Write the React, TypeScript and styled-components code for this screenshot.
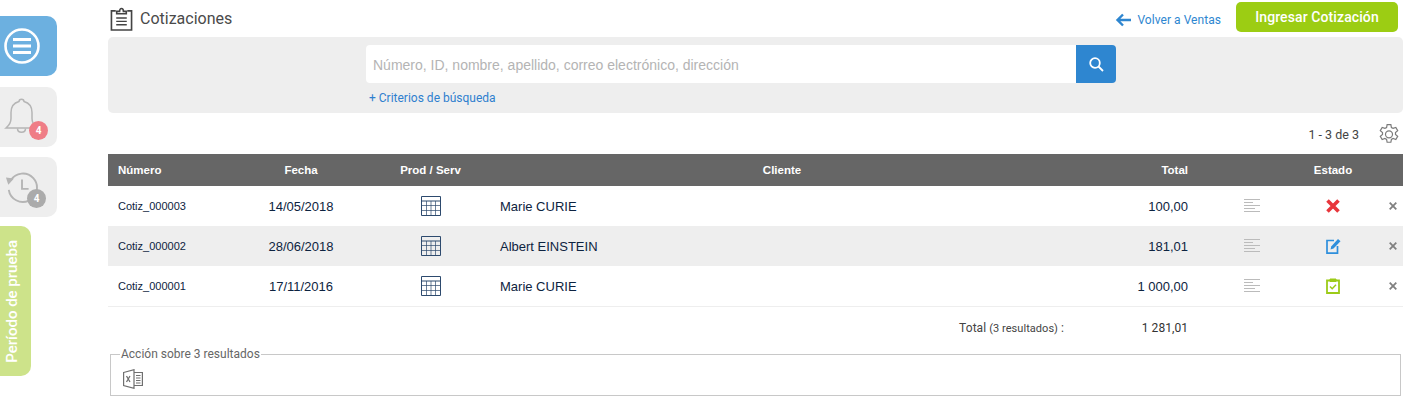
import React from 'react';
import styled, {createGlobalStyle} from 'styled-components';

const GlobalStyle = createGlobalStyle`
    html, body {
        margin: 0;
        padding: 0;
        background: #fff;
    }
    * {
        box-sizing: border-box;
    }
`

const COLUMNS = '133px 120px 139px 564px 134px 108px 54px 43px';

type Status = 'rejected' | 'draft' | 'accepted';

const rows: {id: string, date: string, client: string, total: string, status: Status}[] = [
    {id: 'Cotiz_000003', date: '14/05/2018', client: 'Marie CURIE', total: '100,00', status: 'rejected'},
    {id: 'Cotiz_000002', date: '28/06/2018', client: 'Albert EINSTEIN', total: '181,01', status: 'draft'},
    {id: 'Cotiz_000001', date: '17/11/2016', client: 'Marie CURIE', total: '1 000,00', status: 'accepted'},
];

const MenuIcon = () => (
    <svg width="38" height="38" viewBox="0 0 38 38" fill="none" stroke="#fff">
        <circle cx="19" cy="19" r="16.500" strokeWidth="2.600"/>
        <path d="M10 12.500h18M10 19h18M10 25.500h18" strokeWidth="3"/>
    </svg>
);

const BellIcon = () => (
    <svg width="36" height="38" viewBox="0 0 36 38" fill="none" stroke="#b5b5b5" strokeWidth="1.500">
        <path d="M15 3.500c0-3 5-3 5 0 5.500 1.500 8 5.500 8 11v6c0 4 2 7 5 9.500H2c3-2.500 5-5.500 5-9.500v-6c0-5.500 2.500-9.500 8-11z"/>
        <path d="M13.500 30.500c0 5 8 5 8 0"/>
    </svg>
);

const HistoryIcon = () => (
    <svg width="34" height="34" viewBox="0 0 36 36" fill="none" stroke="#b5b5b5" strokeWidth="2">
        <path d="M6 11A15 15 0 1 1 4 21"/>
        <path d="M1 8l8.500 1-6 6.500z" fill="#b5b5b5" stroke="none"/>
        <path d="M18 10v10h7"/>
    </svg>
);

const ClipboardIcon = () => (
    <svg width="23" height="26" viewBox="0 0 24 26" fill="none" stroke="#444" strokeWidth="1.700">
        <path d="M6 4.500H1.500v20h21v-20H18"/>
        <path d="M7 7.500V5h3c0-4 4-4 4 0h3v2.500z" fill="#fff"/>
        <path d="M6.500 12h11M6.500 15.500h11M6.500 19h11" strokeWidth="1.500"/>
    </svg>
);

const BackArrow = () => (
    <svg width="16" height="14" viewBox="0 0 16 14" fill="none" stroke="#2e86d0" strokeWidth="2.400">
        <path d="M16 7H2.500M8 1.500L2.500 7 8 12.500"/>
    </svg>
);

const SearchIcon = () => (
    <svg width="16" height="16" viewBox="0 0 16 16" fill="none" stroke="#fff" strokeWidth="1.800">
        <circle cx="7" cy="7" r="4.800"/>
        <path d="M10.500 10.500L15 15"/>
    </svg>
);

const GearIcon = () => (
    <svg width="22" height="22" viewBox="0 0 20 20" fill="none" stroke="#7b7b7b" strokeWidth="1.100">
        <path d="M8.300 1h3.400l.5 2.600 1.500.8 2.500-.9 1.700 2.900-2 1.700v1.800l2 1.700-1.700 2.900-2.500-.9-1.500.8-.5 2.600H8.300l-.5-2.600-1.500-.8-2.500.9-1.700-2.900 2-1.700V8.100l-2-1.700 1.700-2.900 2.500.9 1.500-.8z" transform="translate(0 .5)"/>
        <circle cx="10" cy="10.300" r="3.200"/>
    </svg>
);

const GridIcon = () => (
    <svg width="20" height="20" viewBox="0 0 20 20" fill="none" stroke="#2d4a6e" strokeWidth="1">
        <path d="M.5.500h19v19H.5zM.5 5h19"/>
        <path d="M.5 9.500h19M.5 14.500h19M5.500 5v14.500M10 5v14.500M14.500 5v14.500" strokeOpacity=".7"/>
    </svg>
);

const NotesIcon = () => (
    <svg width="16" height="14" viewBox="0 0 16 14" fill="none" stroke="#bbb" strokeWidth="1.100">
        <path d="M0 .500h16M0 3.500h9M0 6.500h16M0 9.500h11M0 12.500h16"/>
    </svg>
);

const RejectedIcon = () => (
    <svg width="14" height="14" viewBox="0 0 14 14" fill="none" stroke="#e8363c" strokeWidth="3.600">
        <path d="M1.500 1.500l11 11M12.500 1.500l-11 11"/>
    </svg>
);

const DraftIcon = () => (
    <svg width="15" height="16" viewBox="0 0 15 16" fill="none">
        <path d="M8 2.500H1v12.700h10.500V8" stroke="#2e8fdc" strokeWidth="1.700"/>
        <path d="M4.500 11.500l.7-3L12 1l2.500 2.200-7 7.400z" fill="#2e8fdc"/>
    </svg>
);

const AcceptedIcon = () => (
    <svg width="14" height="16" viewBox="0 0 14 16" fill="none" stroke="#9ccb19">
        <path d="M1 2.500h12v12.500H1z" strokeWidth="1.800"/>
        <path d="M4 1h6v2.500H4z" fill="#9ccb19"/>
        <path d="M4 8.500l2.200 2.200L10 6.800" strokeWidth="1.500"/>
    </svg>
);

const RemoveIcon = () => (
    <svg width="8" height="8" viewBox="0 0 8 8" fill="none" stroke="#808080" strokeWidth="1.800">
        <path d="M.7.700l6.600 6.600M7.300.700L.7 7.300"/>
    </svg>
);

const ExcelIcon = () => (
    <svg width="20" height="20" viewBox="0 0 20 20" fill="none" stroke="#6f6f6f" strokeWidth="1.200">
        <path d="M.6 3.500L11 .7v18.600L.6 16.500z"/>
        <path d="M11 3.500h8.400v13H11M13 6.500h4.500M13 9h4.500M13 11.500h4.500M13 14h4.500"/>
        <path d="M3.500 7l3.500 6M7 7l-3.500 6" strokeWidth="1.300"/>
    </svg>
);

const statusIcons = {
    rejected: <RejectedIcon/>,
    draft: <DraftIcon/>,
    accepted: <AcceptedIcon/>,
};

export default function App() {
    return (
        <Page>
            <GlobalStyle/>
            <Sidebar>
                <SideButton $active><MenuIcon/></SideButton>
                <SideButton>
                    <BellIcon/>
                    <Badge $red>4</Badge>
                </SideButton>
                <SideButton>
                    <HistoryIcon/>
                    <Badge>4</Badge>
                </SideButton>
                <TrialTab><span>Período de prueba</span></TrialTab>
            </Sidebar>

            <Main>
                <Header>
                    <Title><ClipboardIcon/>Cotizaciones</Title>
                    <HeaderActions>
                        <BackLink><BackArrow/>Volver a Ventas</BackLink>
                        <PrimaryButton>Ingresar Cotización</PrimaryButton>
                    </HeaderActions>
                </Header>

                <SearchPanel>
                    <SearchColumn>
                        <SearchBar>
                            <SearchInput placeholder="Número, ID, nombre, apellido, correo electrónico, dirección"/>
                            <SearchButton><SearchIcon/></SearchButton>
                        </SearchBar>
                        <CriteriaLink>+ Criterios de búsqueda</CriteriaLink>
                    </SearchColumn>
                </SearchPanel>

                <Pager>
                    <span>1 - 3 de 3</span>
                    <GearIcon/>
                </Pager>

                <HeadRow>
                    <HeadCell $align="left">Número</HeadCell>
                    <HeadCell>Fecha</HeadCell>
                    <HeadCell>Prod / Serv</HeadCell>
                    <HeadCell>Cliente</HeadCell>
                    <HeadCell $align="right">Total</HeadCell>
                    <span/>
                    <HeadCell>Estado</HeadCell>
                    <span/>
                </HeadRow>

                {rows.map((row, i) => (
                    <Row key={row.id} $shaded={i === 1} $last={i === rows.length - 1}>
                        <IdCell>{row.id}</IdCell>
                        <Cell $align="center">{row.date}</Cell>
                        <Cell $align="center"><GridIcon/></Cell>
                        <Cell>{row.client}</Cell>
                        <Cell $align="right">{row.total}</Cell>
                        <Cell $align="center"><NotesIcon/></Cell>
                        <Cell $align="center">{statusIcons[row.status]}</Cell>
                        <RemoveCell><RemoveIcon/></RemoveCell>
                    </Row>
                ))}

                <TotalRow>
                    <TotalLabel>Total <small>(3 resultados)</small> :</TotalLabel>
                    <TotalValue>1 281,01</TotalValue>
                </TotalRow>

                <ActionBox>
                    <legend>Acción sobre 3 resultados</legend>
                    <ExcelIcon/>
                </ActionBox>
            </Main>
        </Page>
    );
}

const Page = styled.div`
    display: flex;
    width: 1413px;
    height: 405px;
    overflow: hidden;
    font-family: Roboto, sans-serif;
    background: #fff;
`

const Sidebar = styled.aside`
    width: 108px;
    flex-shrink: 0;
    padding-top: 16px;
    display: flex;
    flex-direction: column;
    align-items: flex-start;
`

const SideButton = styled.div<{$active?: boolean}>`
    position: relative;
    width: 57px;
    height: 60px;
    margin-bottom: ${props => props.$active ? '11px' : '10px'};
    border-radius: 0 10px 10px 0;
    display: flex;
    align-items: center;
    justify-content: center;
    padding-right: 13px;
    background: ${props => props.$active ? '#6cb0e0' : '#eee'};
`

const Badge = styled.div<{$red?: boolean}>`
    position: absolute;
    right: ${props => props.$red ? '9px' : '11px'};
    bottom: ${props => props.$red ? '7px' : '9px'};
    width: 19px;
    height: 19px;
    border-radius: 50%;
    background: ${props => props.$red ? '#ef7d86' : '#ababab'};
    color: #fff;
    font-size: 10px;
    font-weight: 700;
    text-align: center;
    line-height: 19px;
`

const TrialTab = styled.div`
    width: 31px;
    height: 150px;
    margin-top: -1px;
    border-radius: 0 10px 10px 0;
    background: #cde38a;
    display: flex;
    align-items: center;
    justify-content: center;
    padding-right: 7px;

    span {
        writing-mode: vertical-rl;
        transform: rotate(180deg);
        color: #fff;
        font-size: 15px;
        font-weight: 500;
        white-space: nowrap;
    }
`

const Main = styled.main`
    width: 1295px;
    flex-shrink: 0;
`

const Header = styled.header`
    height: 37px;
    display: flex;
    justify-content: space-between;
    align-items: flex-start;
`

const Title = styled.h1`
    margin: 6px 0 0 2px;
    display: flex;
    align-items: center;
    gap: 7px;
    font-size: 16px;
    font-weight: 400;
    color: #4a4a4a;
    line-height: 26px;
`

const HeaderActions = styled.div`
    display: flex;
    align-items: flex-start;
    padding-top: 2px;
    margin-right: 5px;
`

const BackLink = styled.a`
    display: flex;
    align-items: center;
    gap: 6px;
    margin-top: 11px;
    margin-right: 15px;
    font-size: 12px;
    letter-spacing: .05px;
    color: #2e86d0;
`

const PrimaryButton = styled.button`
    width: 162px;
    height: 30px;
    border: 0;
    padding: 0;
    border-radius: 5px;
    background: #9ccd13;
    color: #fff;
    font-family: Roboto, sans-serif;
    font-size: 14px;
    font-weight: 500;
    letter-spacing: .1px;
`

const SearchPanel = styled.section`
    height: 76px;
    border-radius: 5px;
    background: #eee;
    padding: 8px 0 0 258px;
`

const SearchColumn = styled.div`
    width: 750px;
`

const SearchBar = styled.div`
    display: flex;
    height: 38px;
`

const SearchInput = styled.input`
    flex: 1;
    min-width: 0;
    border: 0;
    outline: 0;
    padding: 2px 7px 0;
    border-radius: 4px 0 0 4px;
    background: #fff;
    font-family: 'Liberation Sans', sans-serif;
    font-size: 14px;

    &::placeholder {
        color: #b4b4b4;
        opacity: 1;
    }
`

const SearchButton = styled.div`
    width: 40px;
    display: flex;
    align-items: center;
    justify-content: center;
    border-radius: 0 4px 4px 0;
    background: #2e86d0;
`

const CriteriaLink = styled.a`
    display: block;
    margin: 7px 0 0 3px;
    font-size: 12px;
    line-height: 16px;
    color: #2e7fce;
`

const Pager = styled.div`
    height: 41px;
    display: flex;
    align-items: center;
    justify-content: flex-end;
    gap: 19px;
    padding-right: 3px;
    padding-top: 1px;
    font-size: 12.500px;
    color: #444;
`

const HeadRow = styled.div`
    display: grid;
    grid-template-columns: ${COLUMNS};
    height: 32px;
    align-items: center;
    background: #666;
`

const HeadCell = styled.div<{$align?: string}>`
    padding: ${props => props.$align ? '0 10px' : '0'};
    text-align: ${props => props.$align || 'center'};
    font-family: 'Liberation Sans', sans-serif;
    font-size: 11.500px;
    font-weight: 700;
    color: #fff;
`

const Row = styled.div<{$shaded?: boolean, $last?: boolean}>`
    display: grid;
    grid-template-columns: ${COLUMNS};
    height: ${props => props.$last ? '41px' : '40px'};
    align-items: center;
    background: ${props => props.$shaded ? '#eee' : '#fff'};
    border-bottom: ${props => props.$last ? '1px solid #eee' : '0'};
`

const Cell = styled.div<{$align?: 'left' | 'center' | 'right'}>`
    display: flex;
    align-items: center;
    justify-content: ${props => props.$align === 'center' ? 'center' : props.$align === 'right' ? 'flex-end' : 'flex-start'};
    padding-right: ${props => props.$align === 'right' ? '10px' : '0'};
    font-family: 'Liberation Sans', sans-serif;
    font-size: 13px;
    color: #0d2340;
`

const IdCell = styled(Cell)`
    padding-left: 10px;
    font-size: 11px;
`

const RemoveCell = styled.div`
    display: flex;
    justify-content: flex-end;
    padding-right: 6px;
`

const TotalRow = styled.div`
    display: grid;
    grid-template-columns: 956px 134px;
    margin-top: 12px;
    height: 18px;
    align-items: center;
    font-size: 12px;
    letter-spacing: .05px;
    color: #444;
`

const TotalLabel = styled.div`
    text-align: right;

    small {
        font-size: 11px;
    }
`

const TotalValue = styled.div`
    text-align: right;
    padding-right: 10px;
    color: #333;
`

const ActionBox = styled.fieldset`
    width: 1291px;
    height: 49px;
    margin: 10px 0 0 2px;
    padding: 0 0 0 12px;
    border: 1px solid #c8c8c8;

    legend {
        padding: 0 1px;
        margin-left: -3px;
        font-size: 12px;
        line-height: 15px;
        color: #666;
    }

    svg {
        display: block;
        margin-top: 7px;
    }
`
